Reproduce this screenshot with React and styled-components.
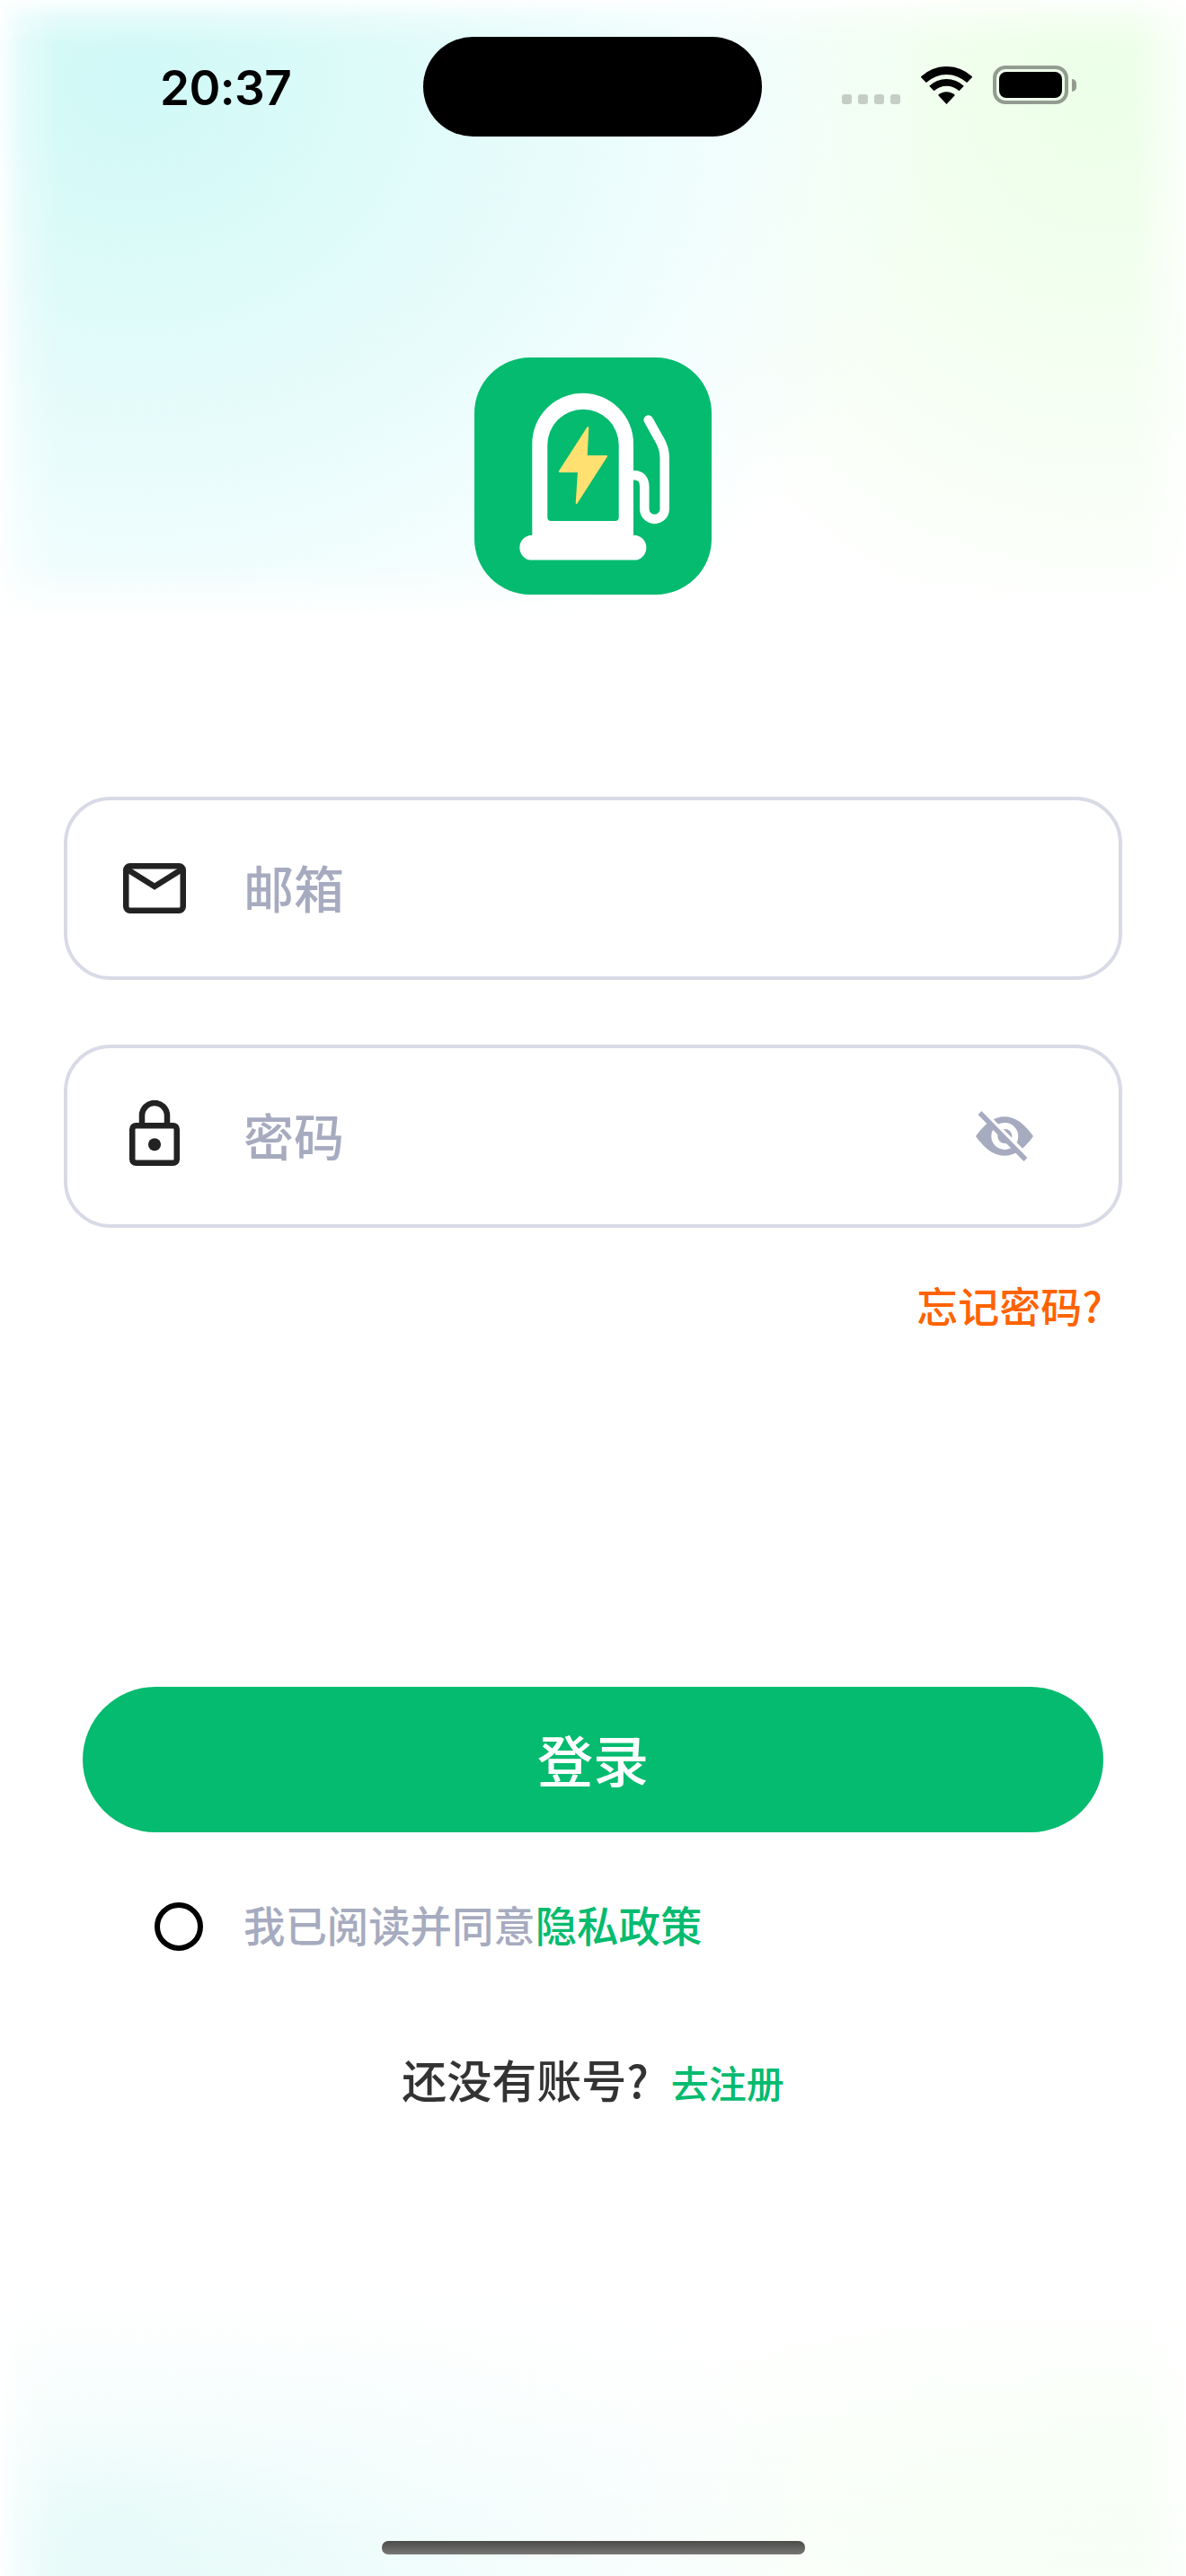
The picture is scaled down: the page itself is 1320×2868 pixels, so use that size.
import React from "react";
import styled, { createGlobalStyle } from "styled-components";

const GREEN = "#04bb6f";
const PLACEHOLDER = "#a6abbf";
const CJK = `"Noto Sans CJK SC", "Noto Sans", sans-serif`;

const GlobalStyle = createGlobalStyle`
  html, body {
    margin: 0;
    padding: 0;
    background: #ffffff;
  }
`;

const Screen = styled.div`
  width: 1320px;
  height: 2868px;
  display: flex;
  flex-direction: column;
  overflow: hidden;
  font-family: ${CJK};
  background-color: #ffffff;
  background-repeat: no-repeat;
  background-image:
    linear-gradient(to right, rgba(255, 255, 255, 0.9), rgba(255, 255, 255, 0.35) 24px, rgba(255, 255, 255, 0) 64px),
    linear-gradient(to left, rgba(255, 255, 255, 0.8), rgba(255, 255, 255, 0) 56px),
    linear-gradient(to bottom, rgba(255, 255, 255, 0.9), rgba(255, 255, 255, 0.35) 20px, rgba(255, 255, 255, 0) 50px),
    linear-gradient(to top, #ffffff, rgba(255, 255, 255, 0) 60px),
    radial-gradient(ellipse 900px 780px at 150px 90px, #d0f9f7 0%, #dffbf9 34%, #effdfd 68%, rgba(255, 255, 255, 0) 100%),
    radial-gradient(ellipse 560px 640px at 1220px 90px, #ecffe8 0%, #f4fff1 50%, rgba(255, 255, 255, 0) 100%),
    linear-gradient(to top, rgba(255, 255, 255, 0), #ffffff 340px),
    radial-gradient(ellipse 800px 360px at 130px 2790px, #e3faf8 0%, #f2fdfc 55%, rgba(255, 255, 255, 0) 100%),
    radial-gradient(ellipse 640px 320px at 1260px 2720px, #f3fff1 0%, #f8fff7 55%, rgba(255, 255, 255, 0) 100%);
  background-size:
    100% 100%,
    100% 100%,
    100% 690px,
    100% 690px,
    100% 690px,
    100% 690px,
    100% 100%,
    100% 100%,
    100% 100%;
  background-position: 0 0;
`;

const StatusBar = styled.div`
  display: flex;
  align-items: flex-start;
  padding-top: 41px;
  height: 152px;
  box-sizing: border-box;
`;

const Time = styled.div`
  width: 471px;
  box-sizing: border-box;
  padding: 25px 0 0 178px;
  font-family: Inter, sans-serif;
  font-weight: 600;
  font-size: 53px;
  line-height: 64px;
  color: #000000;
  letter-spacing: -0.6px;
`;

const Island = styled.div`
  width: 377px;
  height: 111px;
  border-radius: 56px;
  background: #000000;
`;

const Indicators = styled.div`
  display: flex;
  align-items: flex-end;
  margin: 32px 0 0 89px;
  height: 43px;
`;

const SignalDots = styled.div`
  display: flex;
  gap: 7px;
  margin-right: 23px;
`;

const SignalDot = styled.span`
  width: 11px;
  height: 11px;
  border-radius: 3px;
  background: #c6cdc5;
`;

const WifiGlyph = styled.svg`
  width: 57px;
  height: 42px;
  margin-right: 23px;
  display: block;
`;

const BatteryShell = styled.div`
  width: 84px;
  height: 43px;
  box-sizing: border-box;
  border: 4px solid #929c91;
  border-radius: 14px;
  padding: 3px;
`;

const BatteryFill = styled.div`
  height: 100%;
  border-radius: 8px;
  background: #000000;
`;

const BatteryCap = styled.div`
  width: 5px;
  height: 14px;
  margin: 0 0 14px 4px;
  border-radius: 0 5px 5px 0;
  background: #929c91;
`;

const LogoTile = styled.div`
  width: 264px;
  height: 264px;
  margin: 246px auto 0;
  border-radius: 62px;
  background: ${GREEN};
`;

const LogoGlyph = styled.svg`
  width: 264px;
  height: 264px;
  display: block;
`;

const Form = styled.div`
  display: flex;
  flex-direction: column;
  gap: 72px;
  margin-top: 225px;
  padding: 0 71px;
`;

const Field = styled.div`
  height: 204px;
  box-sizing: border-box;
  display: flex;
  align-items: center;
  padding-left: 62px;
  border: 4px solid #d8dae6;
  border-radius: 52px;
  background: #ffffff;
`;

const FieldIcon = styled.div`
  width: 70px;
  display: flex;
  justify-content: center;
  margin-right: 64px;
  padding-bottom: ${props => props.$lift || 0}px;
`;

const Placeholder = styled.span`
  font-size: 56px;
  font-weight: 500;
  line-height: 64px;
  padding-bottom: 4px;
  color: ${PLACEHOLDER};
`;

const EyeGlyph = styled.svg`
  width: 64px;
  height: 56px;
  display: block;
  margin-left: auto;
  margin-right: 95px;
`;

const ForgotRow = styled.div`
  margin-top: 53px;
  padding-right: 93px;
  text-align: right;
  font-size: 46px;
  font-weight: 500;
  line-height: 64px;
  color: #ff6300;
`;

const LoginButton = styled.button`
  display: block;
  width: 1136px;
  height: 162px;
  margin: 394px auto 0;
  padding: 0 0 2px;
  border: none;
  border-radius: 81px;
  background: ${GREEN};
  color: #ffffff;
  font-family: ${CJK};
  font-size: 62px;
  font-weight: 500;
  line-height: 80px;
`;

const AgreeRow = styled.div`
  display: flex;
  align-items: flex-start;
  margin: 78px 0 0 172px;
`;

const RadioRing = styled.span`
  width: 54px;
  height: 54px;
  box-sizing: border-box;
  border: 6px solid #000000;
  border-radius: 50%;
  margin-right: 45px;
`;

const AgreeText = styled.span`
  font-size: 46.4px;
  font-weight: 500;
  line-height: 48px;
  color: ${PLACEHOLDER};
`;

const GreenText = styled.span`
  color: ${GREEN};
  font-size: ${props => props.$size || "inherit"};
`;

const RegisterRow = styled.div`
  display: flex;
  justify-content: center;
  align-items: baseline;
  gap: 25px;
  margin-top: 110px;
  font-size: 50px;
  font-weight: 500;
  line-height: 64px;
  color: #333333;
`;

const HomeBar = styled.div`
  width: 471px;
  height: 15px;
  margin: auto auto 24px;
  border-radius: 7px;
  background: linear-gradient(to bottom, #4b4c48, #777876);
`;

const WifiIcon = () => (
  <WifiGlyph viewBox="0 0 57 42" fill="#000000">
    <path d="M-0.4 11.5A42 42 0 0 1 57.4 11.5L51.2 18.1A33 33 0 0 0 5.8 18.1Z" />
    <path d="M9.2 21.7A28 28 0 0 1 47.8 21.7L42.5 27.3A20.3 20.3 0 0 0 14.5 27.3Z" />
    <path d="M19.1 32.1A13.7 13.7 0 0 1 37.9 32.1L28.5 42Z" />
  </WifiGlyph>
);

const StationLogo = () => (
  <LogoGlyph viewBox="0 0 264 264">
    <path
      fill="#ffffff"
      fillRule="evenodd"
      d="M64.3 198V96a56.3 56.3 0 0 1 112.7 0V198H180a14 14 0 0 1 0 27.5H61.7a14 14 0 0 1 0-27.5ZM81.3 178V97.4a39.7 39.7 0 0 1 79.4 0V178a4 4 0 0 1-4 4H85.3a4 4 0 0 1-4-4Z"
    />
    <path
      fill="none"
      stroke="#ffffff"
      strokeWidth="10.5"
      strokeLinecap="round"
      d="M193.7 69.5L206 91.5Q211.7 101 211.7 112V168.7a11.2 11.2 0 0 1-22.4 0V144Q189.3 131 177 131"
    />
    <path
      fill="#ffe071"
      stroke="#ffe071"
      strokeWidth="2"
      strokeLinejoin="round"
      d="M126.3 78L124.7 110H147L113.7 162L116 127H94.8Z"
    />
  </LogoGlyph>
);

const MailIcon = () => (
  <svg width="70" height="56" viewBox="0 0 70 56" fill="none" stroke="#222222" strokeWidth="6.5">
    <rect x="3.25" y="3.25" width="63.5" height="49.5" rx="4.5" />
    <path d="M6 7.7L35 26L64 7.7" />
  </svg>
);

const LockIcon = () => (
  <svg width="56" height="73" viewBox="0 0 56 73" fill="none" stroke="#222222" strokeWidth="6.5">
    <rect x="3.25" y="28.25" width="49.5" height="41.5" rx="4" />
    <path d="M14 28V17a14 14 0 0 1 28 0V28" />
    <circle cx="28" cy="49.3" r="7" fill="#222222" stroke="none" />
  </svg>
);

const EyeOffIcon = () => (
  <EyeGlyph viewBox="0 0 64 56">
    <path
      fill={PLACEHOLDER}
      d="M0 28C10 14 20 6.3 32 6.3S54 14 64 28C54 42 44 49.7 32 49.7S10 42 0 28Z"
    />
    <circle cx="32.3" cy="28" r="15" fill="#ffffff" />
    <circle cx="32.3" cy="28" r="8" fill={PLACEHOLDER} />
    <path d="M9 2L60 53" stroke="#ffffff" strokeWidth="5" />
    <path d="M4.5 2L55.5 54" stroke={PLACEHOLDER} strokeWidth="5.5" />
  </EyeGlyph>
);

const App = () => {
  return (
    <Screen>
      <GlobalStyle />
      <StatusBar>
        <Time>20:37</Time>
        <Island />
        <Indicators>
          <SignalDots>
            <SignalDot />
            <SignalDot />
            <SignalDot />
            <SignalDot />
          </SignalDots>
          <WifiIcon />
          <BatteryShell>
            <BatteryFill />
          </BatteryShell>
          <BatteryCap />
        </Indicators>
      </StatusBar>

      <LogoTile>
        <StationLogo />
      </LogoTile>

      <Form>
        <Field>
          <FieldIcon>
            <MailIcon />
          </FieldIcon>
          <Placeholder>邮箱</Placeholder>
        </Field>
        <Field>
          <FieldIcon $lift={7}>
            <LockIcon />
          </FieldIcon>
          <Placeholder>密码</Placeholder>
          <EyeOffIcon />
        </Field>
      </Form>

      <ForgotRow>忘记密码?</ForgotRow>

      <LoginButton>登录</LoginButton>

      <AgreeRow>
        <RadioRing />
        <AgreeText>
          我已阅读并同意<GreenText>隐私政策</GreenText>
        </AgreeText>
      </AgreeRow>

      <RegisterRow>
        <span>还没有账号?</span>
        <GreenText $size="42px">去注册</GreenText>
      </RegisterRow>

      <HomeBar />
    </Screen>
  );
};

export default App;
